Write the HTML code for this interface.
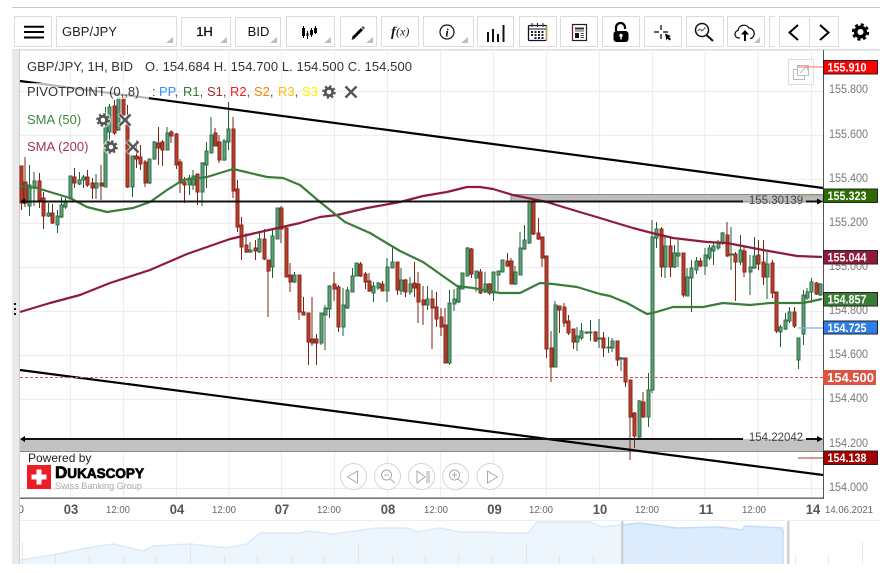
<!DOCTYPE html>
<html>
<head>
<meta charset="utf-8">
<style>
html,body{margin:0;padding:0;background:#fff;width:883px;height:573px;overflow:hidden}
svg{display:block;filter:blur(.35px)}
text{font-family:"Liberation Sans",sans-serif}
</style>
</head>
<body>
<svg width="883" height="573" viewBox="0 0 883 573" xmlns="http://www.w3.org/2000/svg">
<defs>
<g id="gr"><circle r="8" fill="#fff" stroke="none" opacity=".55"/><circle r="3.7" fill="none" stroke-width="2.8"/><circle r="5.6" fill="none" stroke-width="2.4" stroke-dasharray="2.2 2.2"/></g>
<g id="xx"><path d="M-6-6L6 6M6-6L-6 6" stroke="#fff" stroke-opacity=".6" stroke-width="4.5" fill="none"/><path d="M-5.5-5.5L5.5 5.5M5.5-5.5L-5.5 5.5" stroke="#555" stroke-width="2.4" fill="none"/></g>
</defs>

<!-- top rule + toolbar -->
<rect x="12" y="7" width="868" height="1" fill="#c9c9c9"/>
<g fill="#fff" stroke="#dcdcdc">
<rect x="14.5" y="16.5" width="37" height="30"/>
<rect x="56.5" y="16.5" width="120" height="30"/>
<rect x="181.5" y="17.5" width="49" height="29"/>
<rect x="235.5" y="17.5" width="45" height="29"/>
<rect x="286.5" y="16.5" width="48" height="30"/>
<rect x="340.5" y="16.5" width="36" height="30"/>
<rect x="381.5" y="16.5" width="37" height="30"/>
<rect x="423.5" y="16.5" width="50" height="30"/>
<rect x="477.5" y="16.5" width="36" height="30"/>
<rect x="519.5" y="16.5" width="37" height="30"/>
<rect x="560.5" y="16.5" width="37" height="30"/>
<rect x="602.5" y="16.5" width="37" height="30"/>
<rect x="644.5" y="16.5" width="37" height="30"/>
<rect x="686.5" y="16.5" width="37" height="30"/>
<rect x="727.5" y="16.5" width="37" height="30"/>
<path d="M775 16.5H769.5V46.5H775" fill="none"/>
<rect x="779.5" y="16.5" width="30" height="30"/>
<rect x="809.5" y="16.5" width="29" height="30"/>
</g>
<rect x="12" y="49" width="868" height="1.5" fill="#dedede"/>
<g fill="#bdbdbd">
<path d="M173 37v6h-7z"/><path d="M227 37v6h-7z"/><path d="M277 37v6h-7z"/><path d="M331 37v6h-7z"/><path d="M373 37v6h-7z"/><path d="M468 37v6h-7z"/><path d="M760 37v6h-6z"/>
</g>
<!-- menu -->
<path d="M24 26.7h20M24 32h20M24 37.5h20" stroke="#000" stroke-width="2"/>
<text x="62" y="36" font-size="13" fill="#222">GBP/JPY</text>
<text x="204.500" y="36" font-size="13" fill="#111" text-anchor="middle" stroke="#111" stroke-width=".3">1H</text>
<text x="258.500" y="36" font-size="13" fill="#111" text-anchor="middle">BID</text>
<!-- candles icon -->
<path d="M303.500 26v12M307.500 31v8M311.500 28v9M315.500 26v8" stroke="#000" stroke-width="1"/>
<path d="M302 28h3v8h-3zM310 30h3v5h-3zM314 28h3v5h-3z" fill="#000"/>
<path d="M306.500 33h2v3h-2z" fill="#000"/>
<!-- pen -->
<path d="M353 38L362 29" stroke="#000" stroke-width="3"/><path d="M351.500 40l2.500-1-1.500-1.500z" fill="#000"/><path d="M362.500 28.500l1.500-1.500" stroke="#555" stroke-width="3"/>
<!-- f(x) -->
<text x="391" y="36" font-size="14" style="font-family:'Liberation Serif',serif" font-style="italic" font-weight="700" fill="#111">f</text>
<text x="396" y="35.500" font-size="12" style="font-family:'Liberation Serif',serif" font-style="italic" fill="#111">(x)</text>
<!-- info -->
<circle cx="447" cy="32" r="7" fill="none" stroke="#111" stroke-width="1.2"/>
<text x="447" y="36.500" font-size="12" text-anchor="middle" style="font-family:'Liberation Serif',serif" font-style="italic" font-weight="700" fill="#111">i</text>
<!-- bars -->
<path d="M488 42v-10M493 42v-13M498 42v-8M503.500 42v-17" stroke="#111" stroke-width="2"/>
<!-- calendar -->
<rect x="528.500" y="25.500" width="18" height="15" fill="#fff" stroke="#113" stroke-width="1.300" rx="1"/>
<path d="M546.500 26v15" stroke="#d09a30" stroke-width="1"/>
<path d="M529 29h17" stroke="#113"/>
<path d="M532 23v4M537.500 23v4M543 23v4" stroke="#222"/>
<g fill="#222"><rect x="531" y="31" width="2" height="2"/><rect x="534.500" y="31" width="2" height="2"/><rect x="538" y="31" width="2" height="2"/><rect x="541.500" y="31" width="2" height="2"/><rect x="531" y="34" width="2" height="2"/><rect x="534.500" y="34" width="2" height="2"/><rect x="538" y="34" width="2" height="2"/><rect x="541.500" y="34" width="2" height="2"/><rect x="534.500" y="37" width="2" height="2"/><rect x="538" y="37" width="2" height="2"/><rect x="541.500" y="37" width="2" height="2"/></g>
<!-- news -->
<rect x="572.500" y="24.500" width="14" height="16" fill="#fff" stroke="#222" stroke-width="1.200"/>
<path d="M572.500 25v16" stroke="#a06" stroke-width=".7"/>
<path d="M575 27.500h9v2h-9z" fill="#333"/><path d="M575 31h9" stroke="#555"/><rect x="575" y="33" width="4" height="5" fill="#111"/><path d="M580.500 33.500h3.500M580.500 35.500h3.500M580.500 37.500h3.500" stroke="#555"/>
<!-- lock -->
<path d="M616 31v-3.500a4.500 4.500 0 0 1 9 0v1.500" fill="none" stroke="#000" stroke-width="2.200"/>
<rect x="613.500" y="31" width="15" height="11" rx="3" fill="#000"/>
<circle cx="621" cy="35.500" r="1.700" fill="#fff"/><rect x="620.300" y="36" width="1.400" height="3.500" fill="#fff"/>
<!-- crosshair -->
<path d="M655 32h5M664 32h5M662 25v5M662 34v5" stroke="#000" stroke-width="1.200" transform="translate(-1 0)"/>
<path d="M665 33.500l6 2.500-2 1 2 2-1.500 1.500-2-2-1 2z" fill="#000"/>
<!-- magnifier -->
<circle cx="702" cy="30" r="6.500" fill="#fff" stroke="#111" stroke-width="1.500"/>
<path d="M706.500 35l6.500 6" stroke="#111" stroke-width="2"/>
<path d="M697.500 31l2.500-2 2 2 3.500-3.500" fill="none" stroke="#555" stroke-width="1"/>
<!-- cloud -->
<path d="M740 38h-1.500a3.800 3.800 0 0 1-.5-7.500a6 6 0 0 1 11-2.500a5.500 5.500 0 0 1 2 10.500h-1" fill="#fff" stroke="#111" stroke-width="1.300"/>
<path d="M745 41v-8" stroke="#000" stroke-width="2"/><path d="M741 34.500l4-4.500 4 4.500z" fill="#000"/>
<!-- prev/next -->
<path d="M798 25l-8.500 7.500 8.500 7.500M820 25l8.500 7.500-8.500 7.500" fill="none" stroke="#000" stroke-width="2"/>
<!-- gear -->
<circle cx="860.500" cy="32" r="4.800" fill="none" stroke="#000" stroke-width="3.500"/>
<circle cx="860.500" cy="32" r="7.300" fill="none" stroke="#000" stroke-width="2.800" stroke-dasharray="3 2.730"/>

<!-- left rail -->
<rect x="12" y="50" width="7" height="514" fill="#e9e9e9"/>
<rect x="19" y="50" width="1" height="514" fill="#cfcfcf"/>
<path d="M15 303v2M15 308v2M15 313v2" stroke="#111" stroke-width="2"/>

<!-- grid -->
<g stroke="#eeeeee" stroke-width="1.200" fill="none">
<path d="M20 91.500H823M20 135.500H823M20 179.500H823M20 223.500H823M20 267.500H823M20 311.500H823M20 355.500H823M20 399.500H823"/>
<path d="M70.500 50V498M123.500 50V498M176.500 50V498M229 50V498M281.500 50V498M334.500 50V498M387.500 50V498M440.500 50V498M493.500 50V498M546.500 50V498M599.500 50V498M652.500 50V498M705 50V498M758 50V498M811.500 50V498"/>
<path d="M20 488.500H823" stroke="#f3e8e8"/>
</g>

<!-- grey zones -->
<rect x="511" y="194.500" width="312" height="7.500" fill="#bdbdbd" stroke="#8a8a8a"/>
<rect x="20" y="439" width="803" height="12" fill="#c2c2c2"/>
<rect x="20" y="451" width="803" height="1" fill="#8a8a8a"/>

<!-- candle wicks -->
<path fill="none" stroke="#7d2317" d="M21.500 166V210M25 157V207M39.500 173V208M43.500 192V229M52.500 204V224M74.500 168V188M87.500 170V187M92.500 178V199M101 165V200M114.500 100V135M123 97V120M127.500 105V188M136.500 140V168M140.500 145V170M145 160V187M158.500 127V165M162.500 140V166M171 130V143M176.500 133V169M180 159V193M184.500 177V203M197.500 174V205M215 128V146M219 135V163M233 117V198M237.500 180V232M241.500 217V260M246 233V253M255.500 240V260M264.500 229V260M268 260V317M281 206V243M286.500 228V277M290 263V292M299 275V320M303.500 297V315M308.500 313V365M312 297V346M316.500 334V365M334 272V301M338.500 285V332M360.500 262V277M365.500 272V289M369 273V292M382.500 281V291M397.500 262V295M405.500 279V297M414.500 262V297M418 272V323M423 286V325M432 290V349M436.500 292V327M441 308V336M445 308V363M471.500 248V278M480.500 269V294M489.500 283V295M507.500 253V267M511 258V284M533.500 200V235M538.500 218V240M542 237V267M546.500 256V358M551 331V382M559.500 306V333M564 303V327M568.500 315V335M573.500 329V349M595.500 331V342M603.500 332V357M617.500 341V366M625.500 358V387M630 380V460M634.500 412V448M643 392V418M661.500 227V277M670.500 238V277M683.500 253V297M700.500 258V267M727 222V257M735.500 252V301M744 245V277M758.500 240V270M763.500 240V285M772.500 260V298M776.500 292V333M794.500 307V328M816.500 282V295"/>
<path fill="none" stroke="#1f5f38" d="M29.500 165V216M34 172V206M48.500 203V217M57.500 210V233M61.500 197V218M65.500 198V209M70 176V199M79.500 172V185M83.500 175V188M96 174V199M105.500 107V187M109.500 104V143M118 97V131M132.500 156V197M149.500 159V184M154 141V160M167 127V150M189.500 175V195M193 170V190M202 162V206M206.500 142V188M211 117V153M224 139V161M228.500 102V150M250 242V253M259.500 232V253M272.500 230V278M277 208V239M294.500 272V283M321 313V345M325 305V350M329.500 285V318M343 288V336M347.500 287V309M352.500 268V292M356 263V276M373.500 282V302M378 282V290M387 258V302M392.500 247V268M401 268V295M410 277V295M427.500 286V310M449.500 290V365M454 289V311M458.500 287V303M462.500 273V289M467.500 247V276M476 271V292M485 272V293M493.500 272V301M498 271V291M502.500 260V272M515 266V285M520 232V275M524.500 225V250M529 202V244M555 301V367M577 327V351M581.500 323V340M586.500 332V334M590.500 320V341M599 319V348M608.500 337V353M612 338V352M621 357V371M639 400V438M648.500 373V427M652 220V393M656.500 222V248M665 235V278M674.500 245V268M678 240V267M687 268V296M691.500 260V312M696.500 257V274M705 248V275M709.500 245V260M713.500 242V265M718 240V250M722.500 232V245M731 227V270M740.500 235V265M750 255V295M754.500 237V269M767 252V299M780.500 325V347M785.500 313V330M789.500 307V323M798.500 338V369M803.500 290V345M807 288V300M811.500 278V303M820 283V296"/>
<!-- candle bodies -->
<path fill="#bc3d2a" stroke="#85291c" d="M20 166h3v37h-3zM24 182h3v21h-3zM38 181h3v19h-3zM42 198h3v18h-3zM51 213h3v10h-3zM73 177h3v6h-3zM86 177h3v8h-3zM91 183h3v5h-3zM100 183h3v3h-3zM113 106h3v27h-3zM122 98h3v17h-3zM126 125h3v62h-3zM135 156h3v3h-3zM139 157h3v7h-3zM144 162h3v21h-3zM157 143h3v5h-3zM161 142h3v8h-3zM170 132h3v4h-3zM175 134h3v31h-3zM179 162h3v21h-3zM183 182h3v3h-3zM196 174h3v18h-3zM214 133h3v13h-3zM218 142h3v18h-3zM232 129h3v62h-3zM236 189h3v38h-3zM240 225h3v22h-3zM245 245h3v7h-3zM254 248h3v3h-3zM263 239h3v20h-3zM267 260h3v11h-3zM280 208h3v21h-3zM285 228h3v49h-3zM289 275h3v7h-3zM298 275h3v37h-3zM302 312h3v3h-3zM307 313h3v29h-3zM311 339h3v4h-3zM315 339h3v4h-3zM333 284h3v5h-3zM337 287h3v40h-3zM359 264h3v12h-3zM364 274h3v8h-3zM368 281h3v10h-3zM381 284h3v7h-3zM396 262h3v28h-3zM404 280h3v12h-3zM413 283h3v5h-3zM417 284h3v18h-3zM422 300h3v5h-3zM431 299h3v9h-3zM435 307h3v12h-3zM440 317h3v10h-3zM444 325h3v38h-3zM470 249h3v25h-3zM479 272h3v21h-3zM488 284h3v9h-3zM506 261h3v5h-3zM510 261h3v23h-3zM532 202h3v32h-3zM537 233h3v6h-3zM541 237h3v21h-3zM545 256h3v93h-3zM550 348h3v19h-3zM558 306h3v4h-3zM563 307h3v16h-3zM567 321h3v12h-3zM572 329h3v13h-3zM594 332h3v9h-3zM602 338h3v10h-3zM616 341h3v19h-3zM624 358h3v24h-3zM629 380h3v37h-3zM633 413h3v23h-3zM642 402h3v15h-3zM660 229h3v38h-3zM669 246h3v21h-3zM682 253h3v42h-3zM699 261h3v5h-3zM726 235h3v21h-3zM734 254h3v8h-3zM743 251h3v21h-3zM757 255h3v9h-3zM762 262h3v15h-3zM771 263h3v30h-3zM775 292h3v39h-3zM793 312h3v14h-3zM815 283h3v11h-3z"/>
<path fill="#62a078" stroke="#2f6d47" d="M28 185h3v21h-3zM33 181h3v6h-3zM47 213h3v3h-3zM56 216h3v9h-3zM60 205h3v12h-3zM64 202h3v5h-3zM69 176h3v23h-3zM78 180h3v4h-3zM82 177h3v3h-3zM95 183h3v5h-3zM104 127h3v60h-3zM108 107h3v25h-3zM117 98h3v32h-3zM131 156h3v31h-3zM148 159h3v24h-3zM153 142h3v17h-3zM166 133h3v17h-3zM188 178h3v7h-3zM192 176h3v9h-3zM201 163h3v29h-3zM205 151h3v14h-3zM210 135h3v18h-3zM223 141h3v19h-3zM227 129h3v13h-3zM249 250h3v2h-3zM258 239h3v13h-3zM271 236h3v31h-3zM276 208h3v31h-3zM293 275h3v7h-3zM320 313h3v30h-3zM324 308h3v7h-3zM328 286h3v23h-3zM342 305h3v22h-3zM346 290h3v18h-3zM351 276h3v16h-3zM355 263h3v13h-3zM372 286h3v7h-3zM377 283h3v5h-3zM386 267h3v24h-3zM391 262h3v6h-3zM400 280h3v11h-3zM409 284h3v8h-3zM426 299h3v6h-3zM448 303h3v60h-3zM453 299h3v5h-3zM457 288h3v14h-3zM461 273h3v16h-3zM466 248h3v28h-3zM475 271h3v7h-3zM484 284h3v8h-3zM492 272h3v21h-3zM497 271h3v4h-3zM501 260h3v12h-3zM514 272h3v12h-3zM519 248h3v27h-3zM523 240h3v9h-3zM528 202h3v41h-3zM554 305h3v62h-3zM576 336h3v6h-3zM580 331h3v7h-3zM585 332h3v1h-3zM589 332h3v1h-3zM598 338h3v1h-3zM607 347h3v1h-3zM611 341h3v7h-3zM620 358h3v1h-3zM638 401h3v36h-3zM647 390h3v27h-3zM651 237h3v153h-3zM655 229h3v9h-3zM664 246h3v21h-3zM673 253h3v14h-3zM677 253h3v3h-3zM686 277h3v19h-3zM690 268h3v10h-3zM695 261h3v9h-3zM704 255h3v11h-3zM708 248h3v10h-3zM712 246h3v5h-3zM717 243h3v5h-3zM721 233h3v10h-3zM730 254h3v1h-3zM739 250h3v12h-3zM749 267h3v5h-3zM753 256h3v12h-3zM766 264h3v13h-3zM779 327h3v5h-3zM784 320h3v9h-3zM788 312h3v9h-3zM797 338h3v22h-3zM802 295h3v39h-3zM806 292h3v6h-3zM810 282h3v10h-3zM819 284h3v11h-3z"/>

<!-- SMA lines -->
<polyline fill="none" stroke="#8f1b3a" stroke-width="2.200" stroke-linejoin="round" points="20,312 50,303 80,295 110,283 150,270 187,254 230,239 260,232 300,223 320,217 337,215 367,208 400,202 423,196 447,192 467,187 480,187 493,189 513,195 547,202 563,207 583,213 600,218 613,222 633,228 652,233 673,238 707,242 727,243 763,250 797,256 822,257"/>
<polyline fill="none" stroke="#3a7d3a" stroke-width="2.200" stroke-linejoin="round" points="20,186 37,188 50,192 70,198 87,207 107,212 133,208 150,202 167,190 183,180 207,177 233,169 267,177 283,178 300,185 320,202 345,222 370,233 400,251 423,262 457,286 473,288 500,293 520,293 540,283 553,284 577,287 600,294 610,296 627,303 647,314 653,313 673,307 703,307 723,303 750,305 770,303 803,303 822,299"/>

<!-- trend lines -->
<path d="M20 81L823 188M20 370L823 475" stroke="#000" stroke-width="2.200" fill="none"/>
<path d="M24 201.500H743M806 201.500H818" stroke="#111" stroke-width="2" fill="none"/>
<path d="M24 439H743M806 439H818" stroke="#111" stroke-width="2" fill="none"/>
<path d="M20 201.500l5-3v6zM823 201.500l-6-3v6zM20 439l5-3v6zM823 439l-6-3v6z" fill="#000"/>
<text x="776" y="204" font-size="11.500" fill="#444" text-anchor="middle">155.30139</text>
<text x="776" y="441" font-size="11.500" fill="#444" text-anchor="middle">154.22042</text>
<path d="M20 377.500H823" stroke="#d9534f" stroke-width="1" stroke-dasharray="3 2"/>

<!-- legend -->
<rect x="27" y="83" width="122" height="16" fill="#fff" opacity=".72"/>
<text x="27" y="71" font-size="13" fill="#333">GBP/JPY, 1H, BID</text>
<text x="145" y="71" font-size="13" fill="#333" textLength="267">O. 154.684 H. 154.700 L. 154.500 C. 154.500</text>
<text x="27" y="96" font-size="13" fill="#333">PIVOTPOINT (0,,8)</text>
<text x="152" y="96" font-size="13" fill="#444">:</text>
<text x="159" y="96" font-size="13" fill="#3b8bff">PP<tspan fill="#555">,</tspan></text>
<text x="183" y="96" font-size="13" fill="#2e7d32">R1<tspan fill="#555">,</tspan></text>
<text x="207" y="96" font-size="13" fill="#a82a2a">S1<tspan fill="#555">,</tspan></text>
<text x="230" y="96" font-size="13" fill="#ff1a1a">R2<tspan fill="#555">,</tspan></text>
<text x="254" y="96" font-size="13" fill="#ff8000">S2<tspan fill="#555">,</tspan></text>
<text x="278" y="96" font-size="13" fill="#ffc000">R3<tspan fill="#555">,</tspan></text>
<text x="302" y="96" font-size="13" fill="#fff000">S3</text>
<use href="#gr" x="329" y="92" stroke="#555"/>
<use href="#xx" x="351" y="92"/>
<text x="27" y="124" font-size="13" fill="#3f8a3f">SMA (50)</text>
<use href="#gr" x="103" y="120" stroke="#555"/>
<use href="#xx" x="125" y="120"/>
<text x="27" y="151" font-size="13" fill="#a33550">SMA (200)</text>
<use href="#gr" x="111" y="147" stroke="#555"/>
<use href="#xx" x="133" y="147"/>

<!-- popout -->
<rect x="788.500" y="59.500" width="25" height="25" fill="#fff" fill-opacity=".6" stroke="#ddd"/>
<rect x="793.500" y="69.500" width="11" height="10" fill="none" stroke="#bbb"/>
<rect x="797.500" y="65.500" width="11" height="10" fill="#fff" stroke="#bbb"/>
<path d="M800 73l7-7M803 65.500h4.500v4.500" fill="none" stroke="#bbb"/>

<!-- powered by -->
<text x="28" y="462" font-size="12" fill="#222">Powered by</text>
<rect x="27" y="465" width="24" height="24" fill="#ee1c25"/>
<path d="M36.500 470h5v5h5v5h-5v5h-5v-5h-5v-5h5z" fill="#fff" transform="translate(0 -.500)"/>
<text x="55" y="478" font-size="13.500" font-weight="700" fill="#000" stroke="#000" stroke-width=".7" textLength="89" lengthAdjust="spacingAndGlyphs"><tspan font-size="17">D</tspan>UKASCOPY</text>
<text x="55" y="489" font-size="9.500" fill="#aaa" textLength="87" lengthAdjust="spacingAndGlyphs">Swiss Banking Group</text>

<!-- nav buttons -->
<g fill="#fff" fill-opacity=".85" stroke="#d4d4d4">
<circle cx="353.500" cy="476.500" r="13"/><circle cx="387.500" cy="476.500" r="13"/><circle cx="421.500" cy="476.500" r="13"/><circle cx="455.500" cy="476.500" r="13"/><circle cx="490" cy="476.500" r="13"/>
</g>
<g fill="none" stroke="#aaa">
<path d="M357.500 471v12l-10-6z"/>
<circle cx="386.500" cy="475" r="5"/><path d="M390 479l5 4M384 475h5"/>
<path d="M417 471v12l8-6zM427 471v12M429 471v12"/>
<circle cx="454.500" cy="475" r="5"/><path d="M458 479l5 4M452 475h5M454.500 472.500v5"/>
<path d="M487.500 471v12l10-6z"/>
</g>

<!-- axes -->
<rect x="20" y="497.500" width="804" height="1.300" fill="#555"/>
<rect x="823" y="50" width="1" height="449" fill="#555"/>

<!-- price labels -->
<g font-size="11.500" fill="#777">
<text x="829" y="93" textLength="39" lengthAdjust="spacingAndGlyphs">155.800</text><text x="829" y="138" textLength="39" lengthAdjust="spacingAndGlyphs">155.600</text><text x="829" y="182" textLength="39" lengthAdjust="spacingAndGlyphs">155.400</text><text x="829" y="226" textLength="39" lengthAdjust="spacingAndGlyphs">155.200</text><text x="829" y="270" textLength="39" lengthAdjust="spacingAndGlyphs">155.000</text><text x="829" y="314" textLength="39" lengthAdjust="spacingAndGlyphs">154.800</text><text x="829" y="358" textLength="39" lengthAdjust="spacingAndGlyphs">154.600</text><text x="829" y="402" textLength="39" lengthAdjust="spacingAndGlyphs">154.400</text><text x="829" y="447" textLength="39" lengthAdjust="spacingAndGlyphs">154.200</text><text x="829" y="491" textLength="39" lengthAdjust="spacingAndGlyphs">154.000</text>
</g>

<!-- price tags -->
<path d="M798 67h25" stroke="#f88" stroke-width="1.200"/>
<path d="M798 458h25" stroke="#a33" stroke-width="1"/>
<path d="M800 196h23" stroke="#9bb88a"/>
<path d="M798 328h25" stroke="#7fb0f0" stroke-width="1.200"/>
<g stroke="#222">
<rect x="823.500" y="60.500" width="54" height="13.500" fill="#ff0000"/>
<rect x="823.500" y="451" width="54" height="13.500" fill="#a40000"/>
<rect x="823.500" y="189" width="54" height="13.500" fill="#2c6b00"/>
<rect x="823.500" y="250.500" width="54" height="13.500" fill="#8f1b3a"/>
<rect x="823.500" y="292.500" width="54" height="13.500" fill="#3c7d35"/>
<rect x="823.500" y="321" width="54" height="13" fill="#2f7ee8"/>
</g>
<rect x="823" y="370" width="53" height="15" fill="#dc5443"/>
<g font-size="12" font-weight="700" fill="#fff">
<text x="827.500" y="71.500" textLength="39" lengthAdjust="spacingAndGlyphs">155.910</text>
<text x="827.500" y="462" textLength="39" lengthAdjust="spacingAndGlyphs">154.138</text>
<text x="827.500" y="200" textLength="39" lengthAdjust="spacingAndGlyphs">155.323</text>
<text x="827.500" y="261.500" textLength="39" lengthAdjust="spacingAndGlyphs">155.044</text>
<text x="827.500" y="303.500" textLength="39" lengthAdjust="spacingAndGlyphs">154.857</text>
<text x="827.500" y="332" textLength="39" lengthAdjust="spacingAndGlyphs">154.725</text>
<text x="827" y="382" font-size="13" textLength="47" lengthAdjust="spacingAndGlyphs">154.500</text>
</g>

<!-- time axis -->
<text x="24" y="513" font-size="11" fill="#555" text-anchor="end">0</text>
<rect x="12" y="500" width="7" height="16" fill="#e9e9e9"/>
<rect x="19" y="500" width="1" height="16" fill="#cfcfcf"/>
<g font-size="14" font-weight="700" fill="#555" text-anchor="middle">
<text x="71" y="514" textLength="14.500" lengthAdjust="spacingAndGlyphs">03</text><text x="177" y="514" textLength="14.500" lengthAdjust="spacingAndGlyphs">04</text><text x="282" y="514" textLength="14.500" lengthAdjust="spacingAndGlyphs">07</text><text x="388" y="514" textLength="14.500" lengthAdjust="spacingAndGlyphs">08</text><text x="494.500" y="514" textLength="14.500" lengthAdjust="spacingAndGlyphs">09</text><text x="600" y="514" textLength="14.500" lengthAdjust="spacingAndGlyphs">10</text><text x="706" y="514" textLength="14.500" lengthAdjust="spacingAndGlyphs">11</text><text x="813" y="514" textLength="14.500" lengthAdjust="spacingAndGlyphs">14</text>
</g>
<g font-size="10.500" fill="#666" text-anchor="middle">
<text x="118" y="513" textLength="24" lengthAdjust="spacingAndGlyphs">12:00</text><text x="224" y="513" textLength="24" lengthAdjust="spacingAndGlyphs">12:00</text><text x="329" y="513" textLength="24" lengthAdjust="spacingAndGlyphs">12:00</text><text x="436" y="513" textLength="24" lengthAdjust="spacingAndGlyphs">12:00</text><text x="541" y="513" textLength="24" lengthAdjust="spacingAndGlyphs">12:00</text><text x="647" y="513" textLength="24" lengthAdjust="spacingAndGlyphs">12:00</text><text x="754" y="513" textLength="24" lengthAdjust="spacingAndGlyphs">12:00</text><text x="849" y="513" textLength="48" lengthAdjust="spacingAndGlyphs">14.06.2021</text>
</g>
<rect x="20" y="520" width="860" height="1" fill="#eeeeee"/>

<!-- navigator -->
<polygon fill="#eef6fd" points="20,560 33,558 53,555 87,548 113,544 143,551 153,546 190,544 227,548 247,544 260,533 300,533 307,531 333,534 377,528 407,528 417,532 440,528 460,532 490,532 503,533 528,533 537,522 590,522 603,527 622,525 622,564 20,564"/>
<polyline fill="none" stroke="#dce9fb" stroke-width="1.500" points="20,560 33,558 53,555 87,548 113,544 143,551 153,546 190,544 227,548 247,544 260,533 300,533 307,531 333,534 377,528 407,528 417,532 440,528 460,532 490,532 503,533 528,533 537,522 590,522 603,527 622,525"/>
<polygon fill="#dcecfd" points="622,525 640,523 677,528 720,527 742,530 745,526 782,528 783,530 783,564 622,564"/>
<polyline fill="none" stroke="#c5dcf9" stroke-width="1.500" points="622,525 640,523 677,528 720,527 742,530 745,526 782,528 783,530 783,564"/>
<g stroke="#e6e6e6" stroke-width="1">
<path d="M55.500 555v9M89.500 555v9M123.500 555v9M156.500 555v9M224.500 555v9M257.500 555v9M291.500 555v9M324.500 555v9M392.500 555v9M425.500 555v9M458.500 555v9M492.500 555v9M559.500 555v9M593.500 555v9M627.500 555v9M660.500 555v9M728.500 555v9M762.500 555v9M795.500 555v9M828.500 555v9"/>
<path d="M22.500 542v22M190.500 542v22M358.500 542v22M526.500 542v22M694.500 542v22M862.500 542v22"/>
</g>
<rect x="621" y="521" width="2.500" height="43" fill="#d0d0d0"/>
<rect x="787" y="521" width="2.500" height="43" fill="#d0d0d0"/>
</svg>
</body>
</html>
